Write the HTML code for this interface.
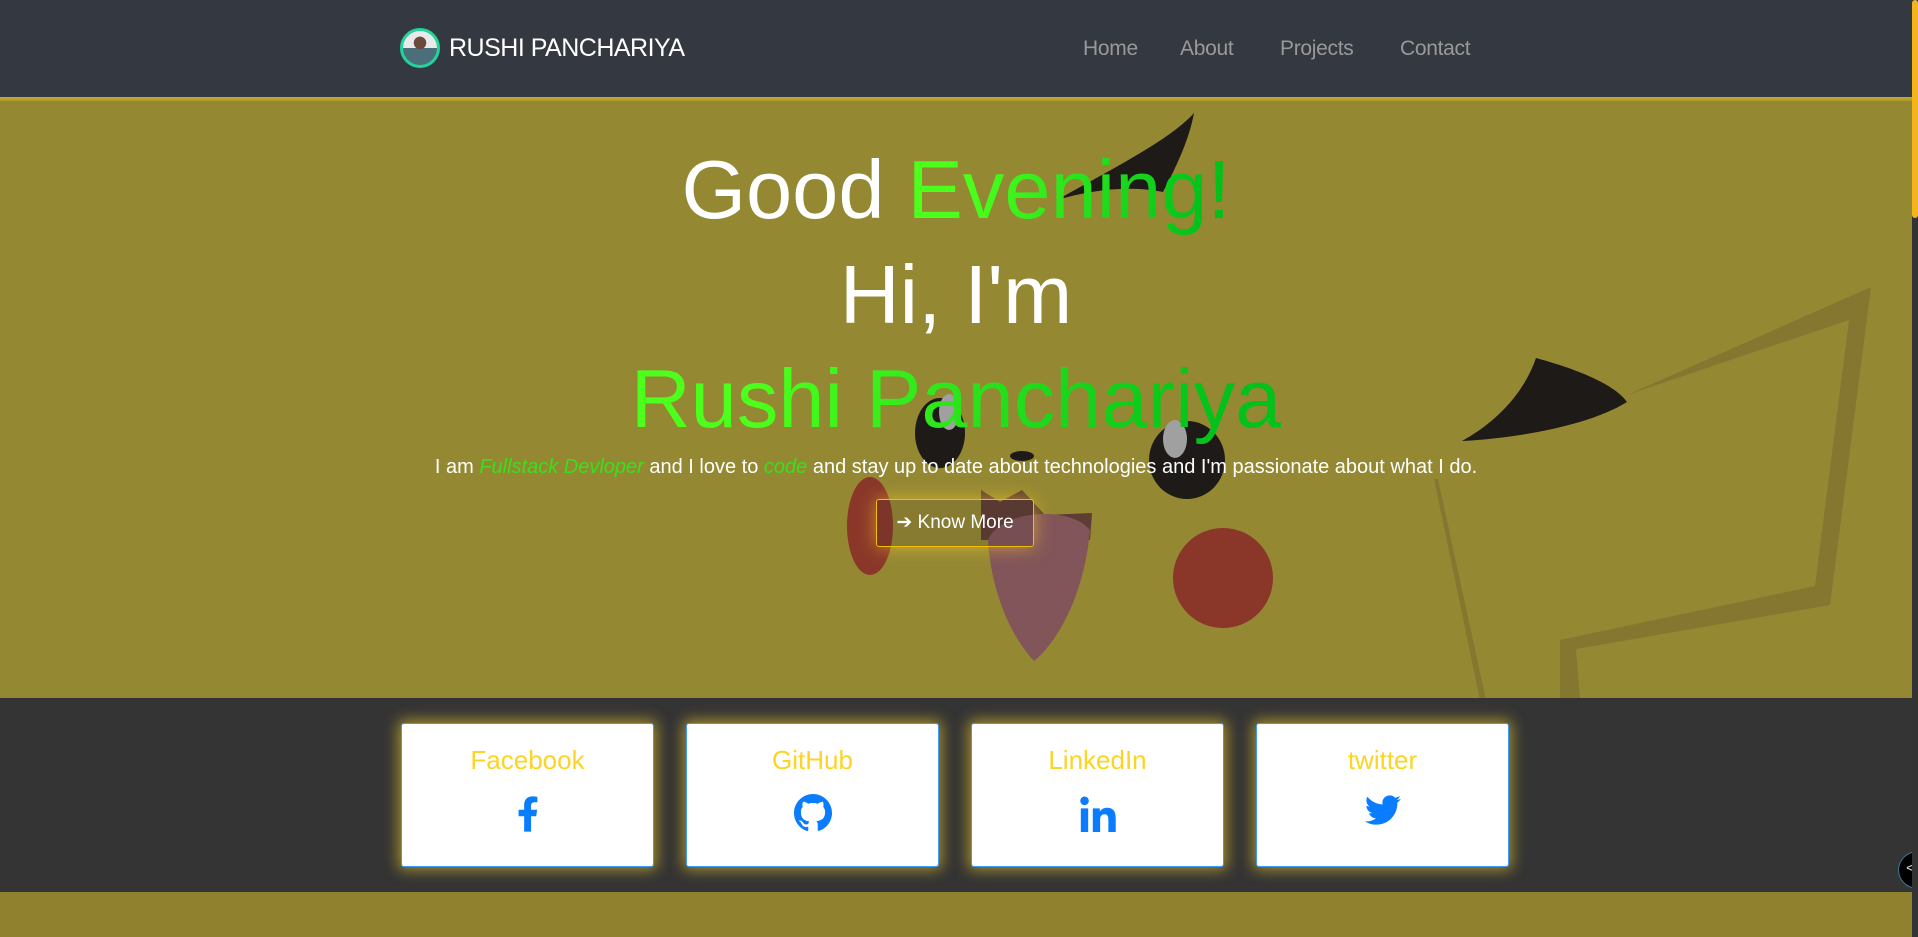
<!DOCTYPE html>
<html><head><meta charset="utf-8"><style>
*{margin:0;padding:0;box-sizing:border-box}
html,body{width:1918px;height:937px;overflow:hidden;background:#333;font-family:"Liberation Sans",sans-serif}
.nav{position:absolute;left:0;top:0;width:1912px;height:97px;background:#343840}
.bar{position:absolute;left:0;top:97px;width:1912px;height:4px;background:linear-gradient(#c9a92a,#a89a30)}
.logo{position:absolute;left:400px;top:28px;width:40px;height:40px;border-radius:50%;border:3px solid #22d39a;background:radial-gradient(circle at 50% 35%,#6b4a3a 0 22%,transparent 23%),linear-gradient(#e9e9e9 50%,#4a6e7a 50%);}
.brand{position:absolute;left:449px;top:34px;color:#fff;font-size:25px;letter-spacing:-0.5px}
.nl{position:absolute;top:37px;color:#999;font-size:21px;letter-spacing:-0.3px}
.hero{position:absolute;left:0;top:101px;width:1912px;height:597px;background:#948833;overflow:hidden}
.t{position:absolute;left:0;width:1912px;text-align:center;font-size:83px;color:#fff;white-space:nowrap;line-height:1}
.g{background:linear-gradient(100deg,#4cff1c 20%,#00c21a 90%);-webkit-background-clip:text;background-clip:text;color:transparent}
.p{position:absolute;left:0;width:1912px;top:355px;text-align:center;color:#fff;font-size:20px}
.p i{color:#39e01c}
.btn{position:absolute;left:876px;top:398px;width:158px;height:48px;border:1px solid #f0c000;border-radius:3px;box-shadow:0 0 18px rgba(255,210,40,.55);color:#fff;font-size:19px;text-align:center;line-height:46px;background:rgba(60,50,40,.15)}
.dark{position:absolute;left:0;top:698px;width:1912px;height:194px;background:#343434}
.card{position:absolute;top:723px;width:253px;height:144px;background:#fff;border:1px solid #3a9aff;border-radius:3px;box-shadow:0 0 14px 3px rgba(255,215,40,.55);text-align:center}
.card .h{margin-top:21px;color:#fcd425;font-size:26px}
.card svg{position:absolute;left:50%;top:70px;transform:translateX(-50%)}
.bot{position:absolute;left:0;top:892px;width:1912px;height:45px;background:#90812f}
.sb{position:absolute;left:1912px;top:0;width:6px;height:937px;background:#333}
.th{position:absolute;left:1912px;top:0;width:6px;height:218px;background:#f2b51c;border-radius:3px}
</style></head><body>
<div class="nav"></div><div class="bar"></div>
<div class="logo"></div>
<div class="brand">RUSHI PANCHARIYA</div>
<div class="nl" style="left:1083px">Home</div>
<div class="nl" style="left:1180px">About</div>
<div class="nl" style="left:1280px">Projects</div>
<div class="nl" style="left:1400px">Contact</div>
<div class="hero">
<svg width="1912" height="597" viewBox="0 101 1912 597" style="position:absolute;left:0;top:0">
<path d="M1194 113 C1170 140 1110 170 1057 200 C1090 190 1130 185 1163 192 C1180 160 1190 135 1194 113Z" fill="#1d1a17"/>
<path d="M1536 358 C1580 370 1615 385 1627 402 C1590 425 1520 438 1462 441 C1500 420 1525 390 1536 358Z" fill="#1d1a17"/>
<path d="M1627 395 L1871 287 L1830 605 L1576 649 L1580 700 L1560 700 L1560 640 L1815 586 L1849 320 Z" fill="#85772f"/>
<path d="M1438 479 L1486 700 L1480 700 L1434 479Z" fill="#85772f"/>
<ellipse cx="940" cy="433" rx="25" ry="35" fill="#1d1a17"/>
<ellipse cx="949" cy="412" rx="10" ry="18" fill="#a0a0a0"/>
<ellipse cx="1187" cy="460" rx="38" ry="39" fill="#1d1a17"/>
<ellipse cx="1175" cy="439" rx="12" ry="19" fill="#a0a0a0"/>
<ellipse cx="1022" cy="456" rx="12" ry="5" fill="#1d1a17"/>
<ellipse cx="870" cy="526" rx="23" ry="49" fill="#8a372a"/>
<ellipse cx="1223" cy="578" rx="50" ry="50" fill="#8a372a"/>
<path d="M981 490 L1000 502 L1022 490 L1045 515 L1092 513 L1090 540 L981 540Z" fill="#5e3d34"/>
<path d="M988 540 C1000 510 1070 505 1090 530 C1085 590 1060 640 1034 661 C1005 630 990 580 988 540Z" fill="#82555a"/>
</svg>
<div class="t" style="top:47px">Good <span class="g">Evening!</span></div>
<div class="t" style="top:152px">Hi, I'm</div>
<div class="t" style="top:256px"><span class="g">Rushi Panchariya</span></div>
<div class="p">I am <i>Fullstack Devloper</i> and I love to <i>code</i> and stay up to date about technologies and I'm passionate about what I do.</div>
<div class="btn">➔ Know More</div>
</div>
<div class="dark"></div>
<div class="card" style="left:401px"><div class="h">Facebook</div>
<svg width="22" height="40" viewBox="0 0 320 512"><path fill="#0a7cff" d="M279 288l14-93h-89v-60c0-25 12-50 52-50h40V6S260 0 225 0c-73 0-121 44-121 125v70H23v93h81v224h100V288z"/></svg></div>
<div class="card" style="left:686px"><div class="h">GitHub</div>
<svg width="38" height="38" viewBox="0 0 16 16"><path fill="#0a7cff" d="M8 0C3.6 0 0 3.6 0 8c0 3.5 2.3 6.5 5.5 7.600.4.1.5-.2.5-.4v-1.4c-2.2.5-2.7-1-2.7-1-.4-.9-.9-1.2-.9-1.2-.7-.5.1-.5.1-.5.8.1 1.2.8 1.2.8.7 1.3 1.9.9 2.3.7.1-.5.3-.9.5-1.1-1.800-.2-3.600-.9-3.600-4 0-.9.3-1.6.8-2.1-.1-.2-.4-1 .1-2.1 0 0 .7-.2 2.2.8.6-.2 1.3-.3 2-.3s1.4.1 2 .3c1.5-1 2.2-.8 2.2-.8.4 1.1.2 1.9.1 2.1.5.6.8 1.3.8 2.1 0 3.1-1.9 3.7-3.7 3.9.3.3.6.8.6 1.5v2.2c0 .2.1.5.6.4C13.7 14.5 16 11.5 16 8c0-4.4-3.6-8-8-8z"/></svg></div>
<div class="card" style="left:971px"><div class="h">LinkedIn</div>
<svg width="36" height="38" viewBox="0 0 448 480"><path fill="#0a7cff" d="M100 480H7V181h93zM54 140C24 140 0 115 0 85a54 54 0 01108 0c0 30-24 55-54 55zm394 340h-93V334c0-35-1-79-48-79-48 0-56 37-56 77v148h-93V181h89v41h1c13-24 43-48 88-48 94 0 112 62 112 142v164z"/></svg></div>
<div class="card" style="left:1256px"><div class="h">twitter</div>
<svg width="36" height="32" viewBox="0 0 512 416"><path fill="#0a7cff" d="M459 104c1 4 1 9 1 13 0 139-106 299-299 299-59 0-115-17-161-47 8 1 16 1 25 1 49 0 94-17 130-45-46-1-85-31-98-73 7 1 13 2 20 2 9 0 19-1 27-4-48-10-84-52-84-103v-1c14 8 30 13 47 13-28-19-47-51-47-87 0-20 5-38 14-53 52 64 129 105 216 110-2-8-3-16-3-24 0-58 47-105 105-105 30 0 57 13 77 33 24-5 46-13 67-25-8 24-25 45-46 58 21-2 42-8 60-16-14 21-32 39-52 54z"/></svg></div>
<div class="bot"></div>
<div style="position:absolute;left:1898px;top:851px;width:40px;height:38px;border-radius:50%;background:#000;border:1px solid #3a7a9a"></div>
<div style="position:absolute;left:1906px;top:860px;color:#ccc;font-size:16px">&lt;</div>
<div class="sb"></div><div class="th"></div>
</body></html>
